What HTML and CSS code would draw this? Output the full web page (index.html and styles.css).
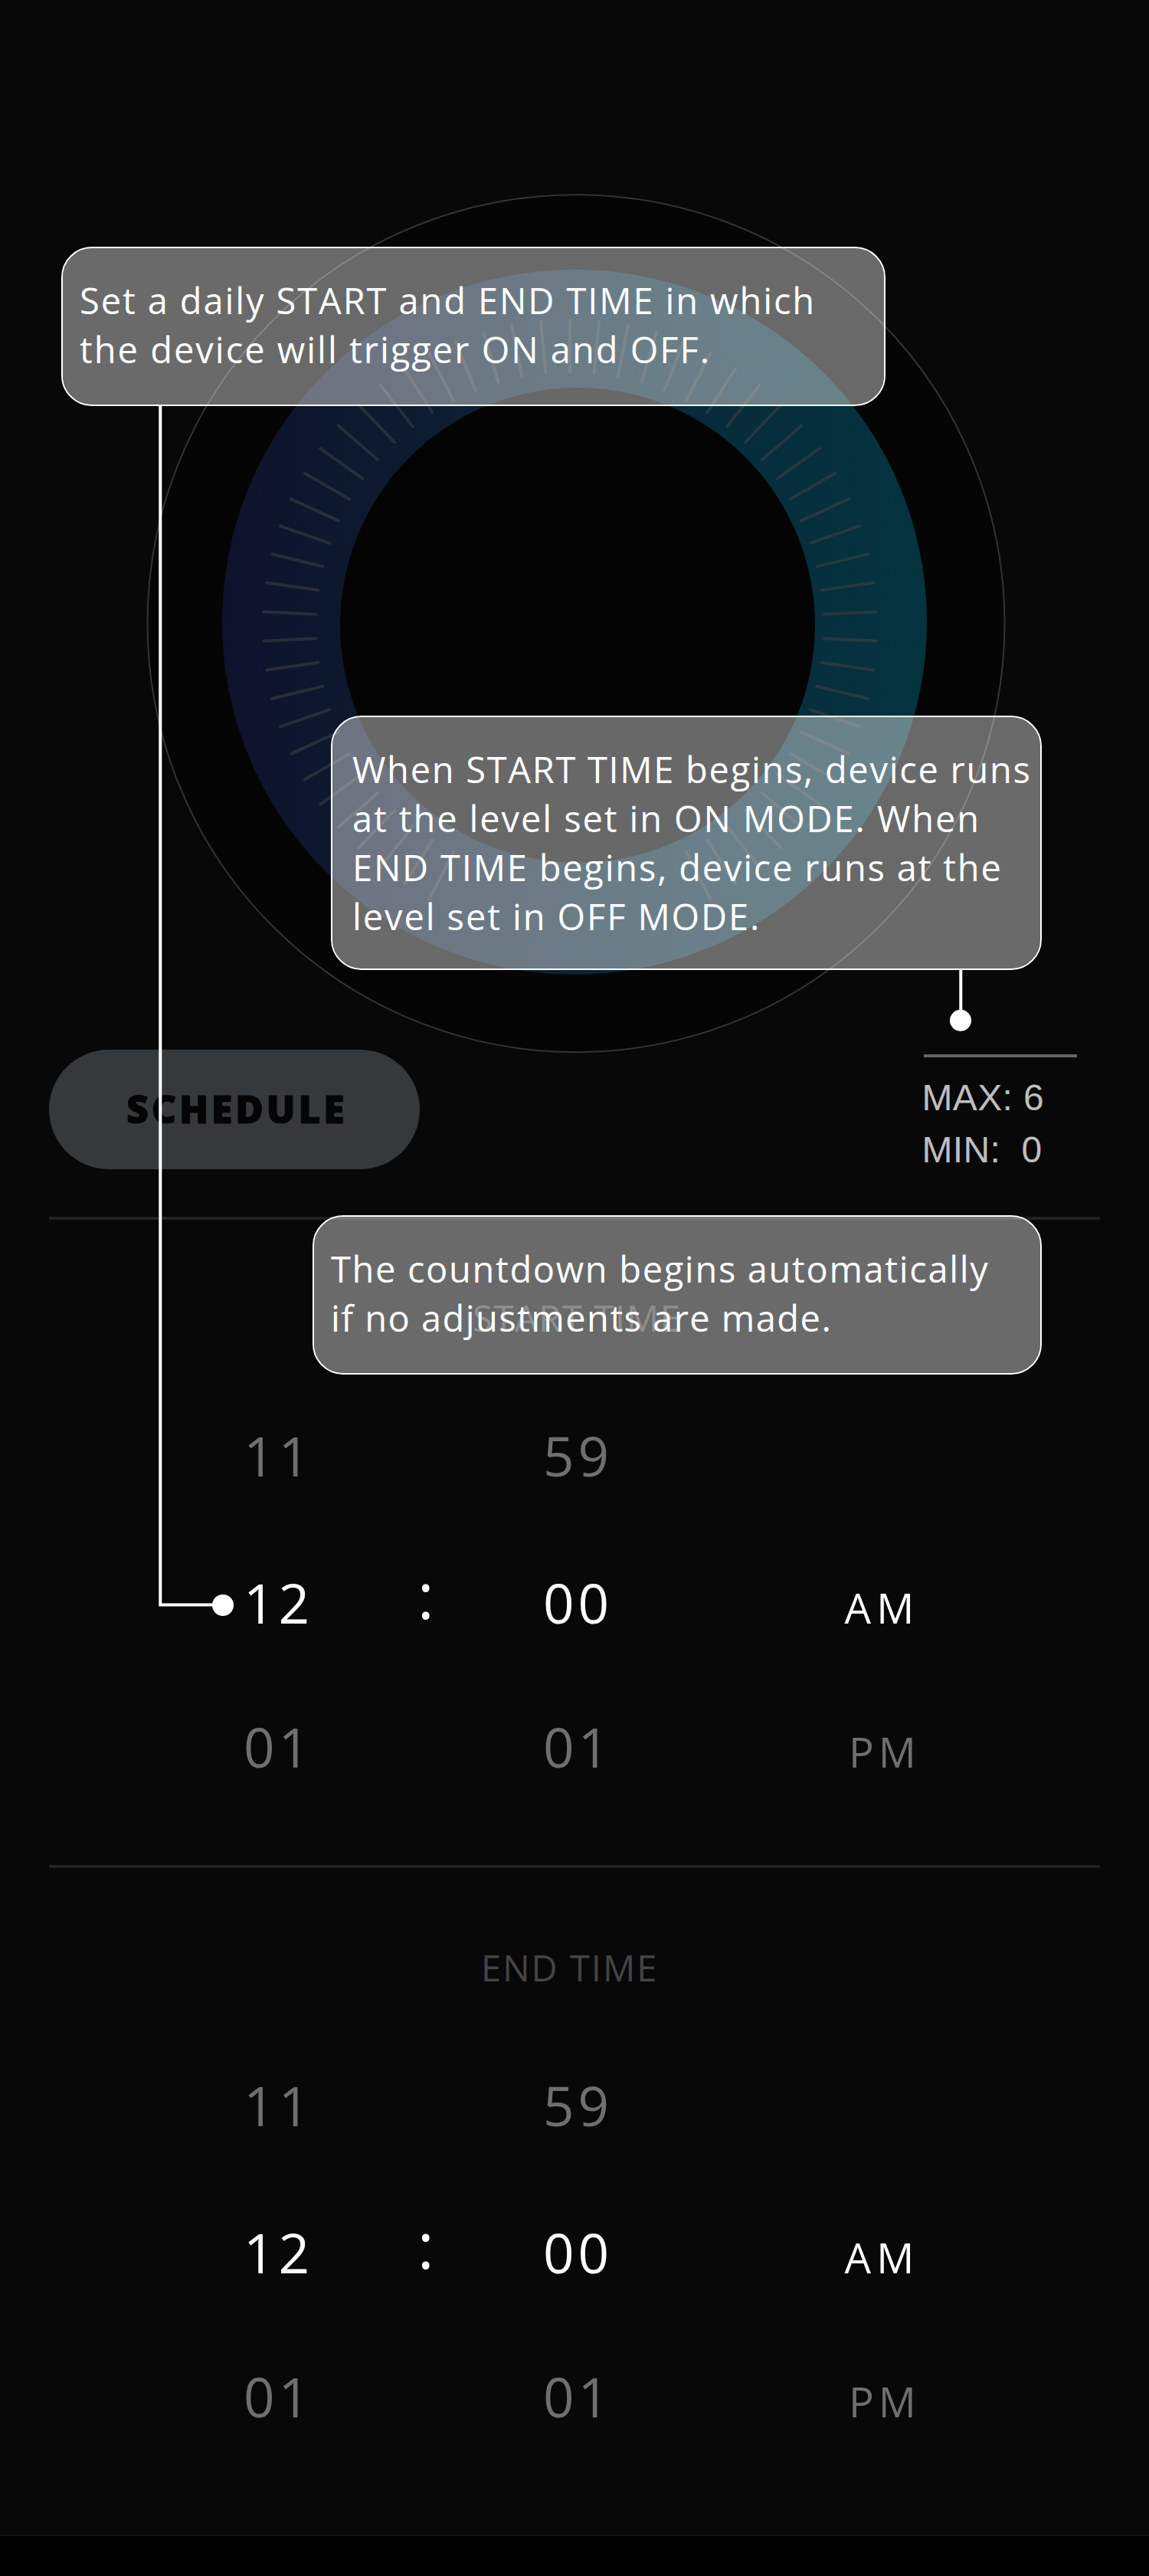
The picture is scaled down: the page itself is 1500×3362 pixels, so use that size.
FILE: index.html
```html
<!DOCTYPE html>
<html lang="en">
<head>
<meta charset="utf-8">
<title>Schedule</title>
<link rel="stylesheet" href="styles.css">
</head>
<body>
<main class="screen">
  <section class="dial">
    <svg class="dial-art" viewBox="190 252 1124 1124" aria-hidden="true">
      <defs>
        <linearGradient id="ring" x1="0" x2="1" y1="0" y2="0">
          <stop offset="0" stop-color="#0e132c"/>
          <stop offset=".3" stop-color="#0c1c31"/>
          <stop offset=".5" stop-color="#092537"/>
          <stop offset=".75" stop-color="#072d3c"/>
          <stop offset="1" stop-color="#04343f"/>
        </linearGradient>
      </defs>
      <circle cx="752" cy="813.7" r="559.5" fill="#050505" stroke="#343434" stroke-width="2"/>
      <circle cx="750" cy="811.8" r="460" fill="url(#ring)"/>
      <circle cx="754" cy="816" r="310" fill="#040404"/>
      <g id="ticks" class="ticks"></g>
    </svg>
  </section>

  <section class="controls">
    <button class="mode">SCHEDULE</button>
    <div class="limits">
      <p>MAX: 6</p>
      <p>MIN:&nbsp; 0</p>
    </div>
  </section>

  <section class="picker">
    <h2 class="picker-title start">START TIME</h2>
    <div class="row dim"><span>11</span><i></i><span>59</span></div>
    <div class="row current"><span>12</span><span class="colon">:</span><span>00</span><span class="am">AM</span></div>
    <div class="row dim"><span>01</span><i></i><span>01</span><span class="pm">PM</span></div>
  </section>

  <section class="picker last">
    <h2 class="picker-title end">END TIME</h2>
    <div class="row dim"><span>11</span><i></i><span>59</span></div>
    <div class="row current"><span>12</span><span class="colon">:</span><span>00</span><span class="am">AM</span></div>
    <div class="row dim"><span>01</span><i></i><span>01</span><span class="pm">PM</span></div>
  </section>

  <footer class="nav-bar"></footer>

  <svg class="pointers" viewBox="0 0 1500 3362" aria-hidden="true">
    <path d="M209.3 529V2094.5H280M1254.3 1265V1325" fill="none" stroke="#fff" stroke-width="4"/>
    <circle cx="291" cy="2095" r="14" fill="#fff"/>
    <circle cx="1254" cy="1331.8" r="14" fill="#fff"/>
  </svg>
  <aside class="tip tip-daily">
    <p class="ls-a">Set a daily START and END TIME in which</p>
    <p class="ls-b">the device will trigger ON and OFF.</p>
  </aside>
  <aside class="tip tip-level">
    <p class="ls-c">When START TIME begins, device runs</p>
    <p class="ls-a">at the level set in ON MODE. When</p>
    <p class="ls-f">END TIME begins, device runs at the</p>
    <p class="ls-a">level set in OFF MODE.</p>
  </aside>
  <aside class="tip tip-countdown">
    <p class="ls-d">The countdown begins automatically</p>
    <p class="ls-e">if no adjustments are made.</p>
  </aside>
</main>
<script src="ticks.js"></script>
</body>
</html>
```
FILE: styles.css
```css
* {
  box-sizing: border-box;
  margin: 0;
  padding: 0;
}

body {
  background: #000;
  font-family: "Open Sans", "Noto Sans", sans-serif;
}

.screen {
  position: relative;
  width: 1500px;
  height: 3362px;
  background: #080808;
  overflow: hidden;
  white-space: nowrap;
}

/* Dial */
.dial {
  height: 1370px;
  padding: 252px 0 0 190px;
}

.dial-art {
  display: block;
  width: 1124px;
  height: 1124px;
}

.ticks {
  stroke: #434343;
  stroke-opacity: .5;
  stroke-width: 4;
  stroke-linecap: round;
}

/* Mode button and limits */
.controls {
  display: flex;
  justify-content: space-between;
  align-items: flex-start;
  height: 218px;
  padding: 0 94px 0 64px;
}

.mode {
  width: 484px;
  height: 156px;
  padding: 0 0 3px 101px;
  border: 0;
  border-radius: 78px;
  background: #36393c;
  color: #050505;
  font: 800 50px "Open Sans", sans-serif;
  letter-spacing: 3.8px;
  text-align: left;
  -webkit-text-stroke: 1px #050505;
}

.limits {
  width: 200px;
  margin-top: 6px;
  padding-top: 19px;
  border-top: 4px solid #646464;
  color: #bebebe;
  font: 48px/68px "Liberation Sans", Arial, sans-serif;
  letter-spacing: .35px;
  text-indent: -2.5px;
}

/* Time pickers */
.picker {
  height: 846px;
  margin: 0 64px;
  padding-top: 96px;
  border-top: 4px solid #212121;
}

.picker.last {
  height: 874px;
  padding-top: 98px;
}

.picker-title {
  margin-bottom: 53px;
  color: #444;
  font-size: 47px;
  font-weight: 400;
  line-height: 64px;
}

.start {
  padding-left: 553px;
  letter-spacing: 1.66px;
}

.end {
  padding-left: 564px;
  letter-spacing: 2.03px;
}

.row {
  display: grid;
  grid-template-columns: 227px 164px 393.5px 1fr;
  align-items: baseline;
  height: 188px;
  padding-left: 254px;
  font-size: 71px;
  line-height: 190px;
  letter-spacing: 5px;
}

.picker-title + .row {
  height: 192px;
}

.dim {
  color: #6f6f6f;
}

.current {
  color: #fff;
}

.colon {
  align-self: start;
  font-size: 82px;
  line-height: 169px;
}

.am,
.pm {
  font-size: 54.6px;
}

.am {
  letter-spacing: 7.2px;
}

.pm {
  padding-left: 5.5px;
  letter-spacing: 5.8px;
}

.nav-bar {
  height: 54px;
  border-top: 2px solid #111;
  background: #000;
}

/* Help overlay */
.pointers {
  position: absolute;
  inset: 0;
  width: 1500px;
  height: 3362px;
}

.tip {
  position: absolute;
  border: 2px solid #fff;
  border-radius: 40px;
  background: rgba(255, 255, 255, .4);
  background-clip: padding-box;
  color: #fff;
  font-size: 47px;
  line-height: 64px;
}

.tip-daily {
  left: 80px;
  top: 322px;
  width: 1076px;
  height: 208px;
  padding: 36px 0 0 22px;
}

.tip-level {
  left: 432px;
  top: 934px;
  width: 928px;
  height: 332px;
  padding: 36px 0 0 26px;
}

.tip-countdown {
  left: 408px;
  top: 1586px;
  width: 952px;
  height: 208px;
  padding: 36px 0 0 22px;
}

.ls-a { letter-spacing: 1.9px; }
.ls-b { letter-spacing: 2px; }
.ls-c { letter-spacing: 1.71px; }
.ls-d { letter-spacing: 1.66px; }
.ls-e { letter-spacing: 1.45px; }
.ls-f { letter-spacing: 1.8px; }
```
FILE: ticks.js
```js
// 66 positions round the dial; the nine at the bottom stay empty.
const group = document.getElementById('ticks');
const step = 360 / 66;
for (let i = -28; i <= 28; i++) {
  const line = document.createElementNS('http://www.w3.org/2000/svg', 'line');
  line.setAttribute('x1', 744);
  line.setAttribute('x2', 744);
  line.setAttribute('y1', 417.5);
  line.setAttribute('y2', 485.5);
  line.setAttribute('transform', `rotate(${i * step} 744 817.5)`);
  group.appendChild(line);
}
```
